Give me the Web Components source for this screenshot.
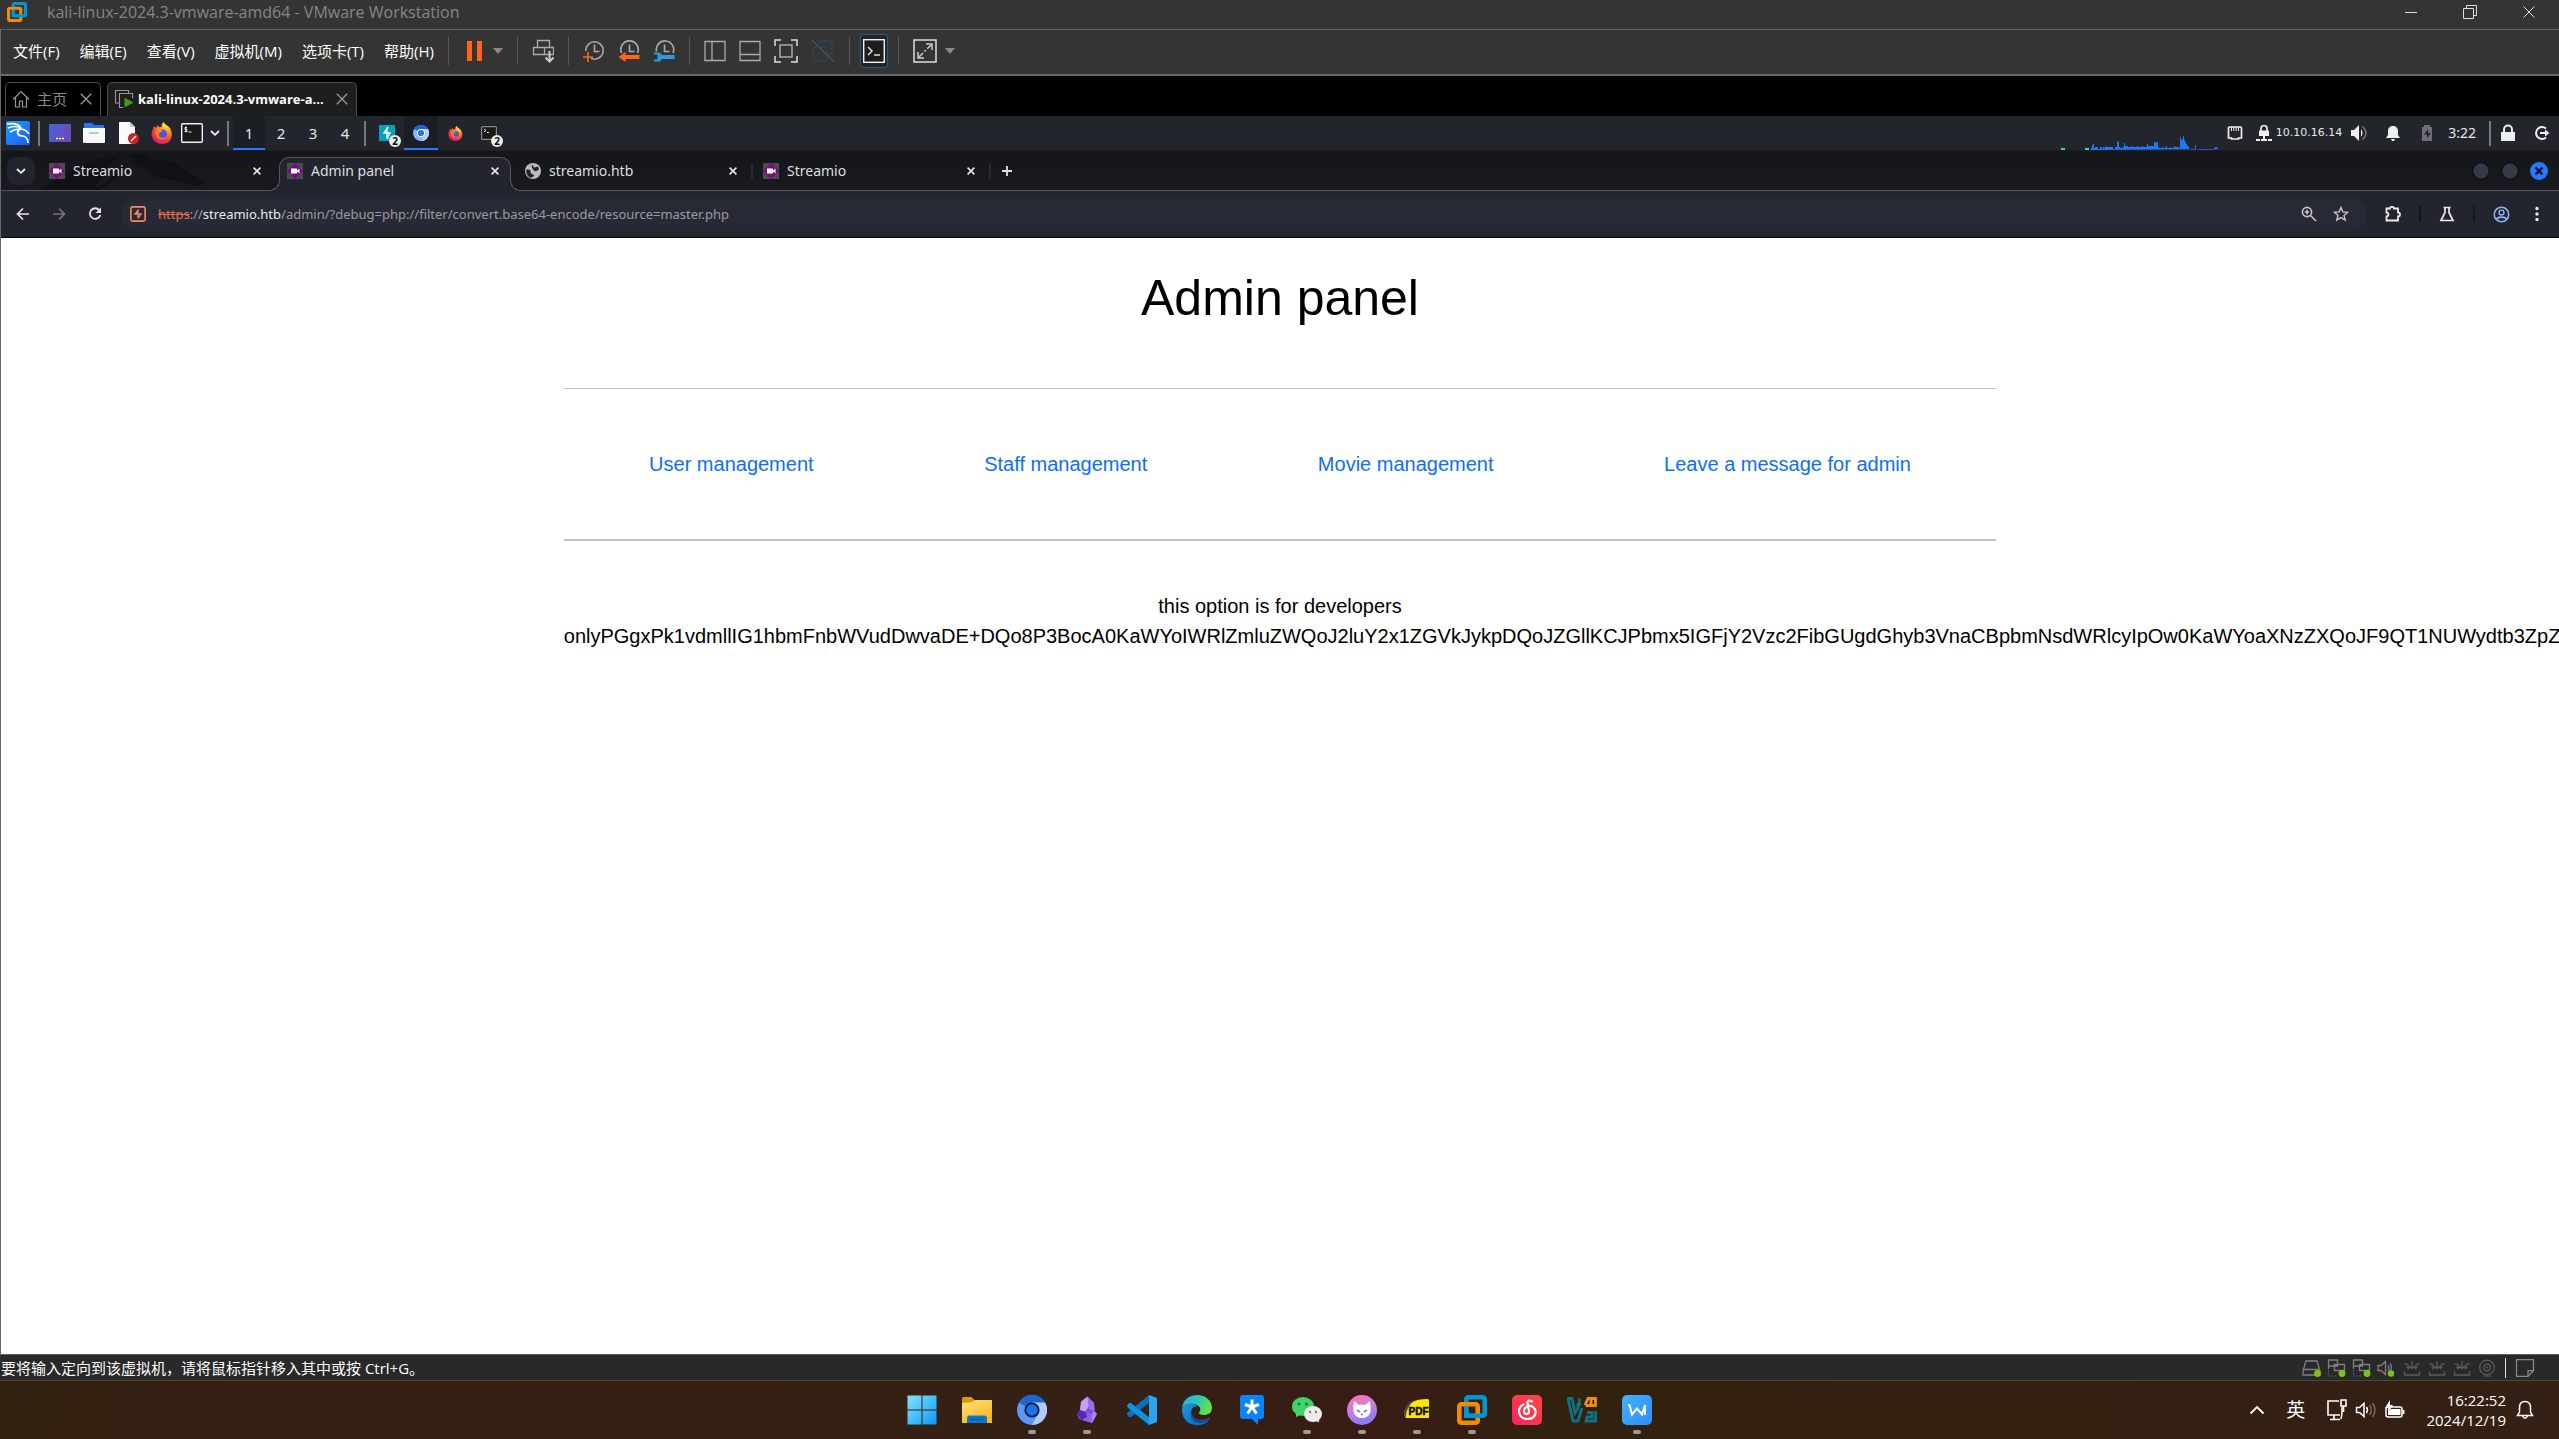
<!DOCTYPE html>
<html lang="zh-CN">
<head>
<meta charset="utf-8">
<meta name="viewport" content="width=device-width, initial-scale=1">
<title>kali-linux-2024.3-vmware-amd64 - VMware Workstation</title>
<style>
  html, body { margin: 0; }
  body { background: #342014; font-family: "Noto Sans", "Noto Sans CJK SC", sans-serif; overflow: hidden; }
</style>
</head>
<body>
<virtual-desktop></virtual-desktop>
<script>
const ICONS = {
  vmware: [30, 30, '<g fill="none" stroke-width="4.6"><rect x="9.3" y="2.3" width="18.4" height="18.4" rx="2" stroke="#0095d3"/><rect x="2.3" y="9.3" width="18.4" height="18.4" rx="2" stroke="#f38b00"/><path d="M9.300 11.600v9.100H25" stroke="#0095d3"/></g>'],
  min: [12, 12, '<path d="M0 6.500h12" stroke="#ddd"/>'],
  restore: [14, 14, '<path d="M.5 3.500h10v10h-10zM3.500 3v-2.500h10v10h-3" fill="none" stroke="#ddd"/>'],
  close: [12, 12, '<path d="M.5.500l11 11M11.500.500l-11 11" stroke="#ddd"/>'],
  pause: [22, 22, '<path d="M4 1h5v20H4zM14 1h5v20h-5z" fill="#ff6418"/>'],
  caret: [10, 6, '<path d="M0 0h10L5 6z" fill="#8a8a8a"/>'],
  print: [22, 24, '<path d="M5.500 8.500v-7h12v7M1.500 8.500h20v7h-20zM12.500 8.500v7M5.500 8.500h12" fill="none" stroke="#aaa" stroke-width="1.300"/><path d="M17.500 12v10M13.500 18.500l4 4 4-4" stroke="#ccc" stroke-width="2" fill="none"/>'],
  snapAdd: [22, 24, '<circle cx="11.500" cy="11.500" r="8.700" fill="none" stroke="#aaa" stroke-width="1.600"/><path d="M11.500 5.500v7h5" fill="none" stroke="#aaa" stroke-width="1.600"/><path d="M0 12h8v11H0z" fill="#343434"/><path d="M5 13v10M0 18h10" stroke="#ff6418" stroke-width="1.600"/>'],
  snapBack: [22, 24, '<path d="M3.500 14a8.700 8.700 0 1 1 16 0" fill="none" stroke="#aaa" stroke-width="1.600"/><path d="M11.500 5.500v7h5" fill="none" stroke="#aaa" stroke-width="1.600"/><path d="M.5 18l7-5v3h14v4h-14v3z" fill="#ff6418"/>'],
  snapTool: [22, 24, '<path d="M3.500 12.500a8.700 8.700 0 1 1 16.500 1.500" fill="none" stroke="#aaa" stroke-width="1.600"/><path d="M11.500 5.500v7h5" fill="none" stroke="#aaa" stroke-width="1.600"/><path d="M1 13.500h5.500l2.500 2.500h12.500v4H9l-2.500 2.500H1V20.500h3.500v-5H1z" fill="#2a9be0"/>'],
  paneLeft: [22, 22, '<path d="M1 1.500h20v19H1zM8 1.500v19" fill="none" stroke="#aaa" stroke-width="1.300"/>'],
  paneBottom: [22, 22, '<path d="M1 1.500h20v19H1zM1 14.500h20" fill="none" stroke="#aaa" stroke-width="1.300"/>'],
  fit: [24, 24, '<path d="M1 7V1h6M17 1h6v6M23 17v6h-6M7 23H1v-6" fill="none" stroke="#ddd" stroke-width="1.500"/><rect x="6" y="6" width="12" height="12" fill="none" stroke="#aaa" stroke-width="1.500"/>'],
  unity: [24, 24, '<g fill="none" stroke="#31414d" stroke-width="1.300"><path d="M8 6V2h13v13h-4M2 8h14v14H2z"/><path d="M1 1l22 22" stroke="#46525a"/></g>'],
  console: [22, 24, '<rect x=".7" y=".7" width="20.600" height="22.600" fill="#1d1d1d" stroke="#f2f2f2" stroke-width="1.400"/><path d="M5 8l4 4-4 4M11 16h6" fill="none" stroke="#ddd" stroke-width="1.500"/>'],
  expand: [24, 24, '<rect x="1" y="1" width="22" height="22" fill="none" stroke="#ddd" stroke-width="1.500"/><path d="M13 5h6v6M5 13v6h6" fill="none" stroke="#ccc" stroke-width="1.500"/><path d="M18.500 5.500l-13 13" stroke="#ccc" stroke-width="1.500" stroke-dasharray="6 2 2 2"/>'],
  home: [18, 18, '<path d="M1 9.500L9 1.500l8 8M3.500 8v9h4v-6h3v6h4V8" fill="none" stroke="#999" stroke-width="1.200"/>'],
  vmOn: [20, 20, '<path d="M5 14H1.500V1.500h13V4M9 18.500H5.500v-14h13V9" fill="none" stroke="#999" stroke-width="1.100"/><path d="M10.500 8.500l9 5-9 5z" fill="#3f9c0c"/>'],
  kali: [26, 26, '<defs><linearGradient id="a" x2="1" y2="1"><stop stop-color="#1fa0ff"/><stop offset="1" stop-color="#1f58f0"/></linearGradient></defs><rect x="1" y="1" width="24" height="24" rx="2" fill="url(#a)"/><path d="M2 4c6-1 12 0 14 4M3 8c5-2 9-2 12 0M5 12c3-2 6-3 10-3 5 0 7 2 9 5M15 9c-4 3-3 7 3 7 4 1 5 4 5 7" fill="none" stroke="#fff" stroke-width="1.700"/>'],
  desktop: [22, 20, '<defs><linearGradient id="a" x2="1" y2=".5"><stop stop-color="#4267d8"/><stop offset="1" stop-color="#7048b8"/></linearGradient></defs><path d="M0 1h22v18H0z" fill="url(#a)"/><path d="M8 15.500h2M11 15.500h2M14 15.500h2" transform="translate(-1)" stroke="#fff" stroke-width="1.500"/>'],
  folder: [22, 20, '<path d="M1 0h8l2 2h10v5H1z" fill="#2877ea"/><path d="M0 5h22v14a1 1 0 0 1-1 1H1a1 1 0 0 1-1-1z" fill="#f7f7f7"/><path d="M6 10h10" stroke="#c6c6c6" stroke-width="2"/>'],
  notepad: [22, 22, '<path d="M2 0h11l5 5v17H2z" fill="#fafafa"/><path d="M13 0v5h5z" fill="#ccc"/><circle cx="16.500" cy="16.500" r="5.500" fill="#cc2024"/><path d="M14 19l5-5" stroke="#fff" stroke-width="1.500"/>'],
  firefox: [22, 22, '<defs><radialGradient id="a" cx=".75" cy=".1" r="1"><stop stop-color="#fff04a"/><stop offset=".35" stop-color="#ff9a1f"/><stop offset=".7" stop-color="#ff3f3c"/><stop offset="1" stop-color="#d8156a"/></radialGradient></defs><path d="M3 4l2 2 2-3 1 2h3c-1-2 0-4 2-5 1 3 3 3 5 5 5 5 4 17-7 17C3 22-2 14 2 7z" fill="url(#a)"/><circle cx="11.500" cy="12" r="4.600" fill="#4a58d8"/><path d="M4 9c3-2 5-1 8 0-2 1-4 1-4 4s4 4 7 2c-2 4-11 3-11-6z" fill="#ff7a2a"/>'],
  terminal: [22, 20, '<rect x=".7" y=".7" width="20.600" height="18.600" rx="1" fill="#191919" stroke="#f0f0f0" stroke-width="1.400"/><path d="M6 4.500H4v2h2v2H3.500M5 3.500v6M7.500 9h3" stroke="#eee" fill="none"/>'],
  termSmall: [16, 14, '<rect x=".6" y=".6" width="14.800" height="12.800" rx="1" fill="#191919" stroke="#888" stroke-width="1.200"/><path d="M3 3l2 1.500L3 6M6 6.500h2" stroke="#eee" fill="none"/>'],
  chevron: [10, 6, '<path d="M1 1l4 3.800L9 1" fill="none" stroke="#eee" stroke-width="1.800"/>'],
  burp: [16, 16, '<path d="M0 0h16v16H0z" fill="#04a3b8"/><path d="M9 2L5 8h3v5M8 3v5h3l-3 6" fill="none" stroke="#fff" stroke-width="1.400"/>'],
  chromium: [30, 30, '<circle cx="15" cy="15" r="15" fill="#5c97f5"/><path d="M15 15L2.010 7.500A15 15 0 0 1 28 7.500z" fill="#1a66d2"/><path d="M15 7.500h13A15 15 0 0 1 15 30l6.500-11.200z" fill="#aecbfa"/><circle cx="15" cy="15" r="7.600" fill="#0d1c38"/><circle cx="15" cy="15" r="5.800" fill="#1a73e8"/>'],
  chromiumS: [16, 16, '<circle cx="8" cy="8" r="8" fill="#8ab4f8"/><path d="M8 8L1 4a8 8 0 0 1 14 0z" fill="#1a66d2"/><path d="M8 4h7a8 8 0 0 1-7 12l3.500-6z" fill="#b5d0fb"/><circle cx="8" cy="8" r="4" fill="#fff"/><circle cx="8" cy="8" r="3.100" fill="#1a73e8"/>'],
  graph: [157, 34, '<path d="M0 32h4v2H0zM24 32h4v2h-4z" fill="#14e0c8"/><path d="M30 34v-2h1v-3h1v-1h1v4h1v-1h3v2h2v-2h2v2h1v-2h1v1h1v-2h1v1h7v2h2v-2h2v-6h1v1h1v5h1v1h3v-1h1v-4h1v3h3v1h4v-1h1v1h4v-1h1v1h4v-1h1v1h4v-3h1v2h6v-4h2v1h1v-1h1v5h1v1h3v-1h1v1h3v-2h1v2h3v-1h1v1h3v-2h1v1h4v1h1V21h1v3h1v-1h1v-3h1v4h1v2h1v2h1v2h2v3h2v1h4v-5h1v4h3v1h4v-1h1v1h3v-1h1v1h3v-1h1v1h2v-2h1v-1h2v1h2v1z" fill="#2277f5"/>'],
  ether: [16, 16, '<path d="M2.500 2h11a1 1 0 0 1 1 1v10h-3v1h-7v-1h-3V3a1 1 0 0 1 1-1z" fill="none" stroke="#eee" stroke-width="1.700"/><path d="M4.500 2v4M6.800 2v4M9.100 2v4M11.400 2v4" stroke="#eee"/>'],
  vpn: [16, 16, '<path d="M3 5.500h10V11H3z" fill="#eee"/><path d="M5 6V3.500a3 3 0 0 1 6 0V6" fill="none" stroke="#eee" stroke-width="1.700"/><path d="M0 15h4M5 15h6M12 15h4M8 11v4" stroke="#eee" stroke-width="2"/>'],
  speaker: [18, 18, '<path d="M1 6h3l5-5v16l-5-5H1z" fill="#eee"/><path d="M11 5q3 4 0 8z" fill="#eee"/><path d="M12.500 2.500q7 6.500 0 13" fill="none" stroke="#777" stroke-width="1.500"/>'],
  bellFill: [16, 16, '<path d="M8 1c3 0 5 2 5 5v4l2 3H1l2-3V6c0-3 2-5 5-5zM6 14h4l-1 2H7z" fill="#eee"/>'],
  charge: [12, 16, '<path d="M3 2V0h6v2h2v14H1V2z" fill="#6d6e74"/><path d="M7 4L3 9.500h3V13l4-5H7z" fill="#22242c"/>'],
  lock: [16, 18, '<path d="M1 8h14v9H1z" fill="#eee"/><path d="M4 8V5.500a4 4 0 0 1 8 0V8" fill="none" stroke="#eee" stroke-width="2"/>'],
  logout: [16, 16, '<path d="M12 3.500a6 6 0 1 0 0 9" fill="none" stroke="#eee" stroke-width="2"/><path d="M6 8h7" stroke="#eee" stroke-width="2"/><path d="M11 4.500L15.500 8 11 11.500z" fill="#eee"/>'],
  movie: [16, 16, '<path d="M0 0h16v16H0z" fill="#4d4b4f"/><path d="M8 0l8 8-8 8-8-8z" fill="#7b0a80"/><path d="M4 5.500h6v5H4zM10 7.500l2.500-2v5l-2.500-2z" fill="#fff"/>'],
  globe: [14, 14, '<circle cx="7" cy="7" r="7" fill="#b9bbbd"/><path d="M1 6c3-1 4 0 4 2s2 1 3 3c0 1-2 1-2 2-3 0-5-3-5-7zM7 1.500c0 2 1 3 3 2s3 2 1 3-3 1-4-1-2-3 0-4z" fill="#222429"/>'],
  x: [8, 8, '<path d="M.6.600l6.800 6.800M7.400.600L.6 7.400" stroke="#e4e4e4" stroke-width="1.700"/>'],
  xWide: [12, 12, '<path d="M.8.800l10.400 10.400M11.200.800L.8 11.200" stroke="#9b9b9b" stroke-width="1.300"/>'],
  plus: [10, 10, '<path d="M5 0v10M0 5h10" stroke="#e0e0e0" stroke-width="1.800"/>'],
  wmClose: [18, 18, '<circle cx="9" cy="9" r="9" fill="#2777ff"/><path d="M5.500 5.500l7 7M12.500 5.500l-7 7" stroke="#101420" stroke-width="2.300"/>'],
  wmDot: [18, 18, '<circle cx="9" cy="9" r="8.300" fill="#353a47" stroke="#0b0c0f" stroke-width="1.200"/>'],
  back: [14, 14, '<path d="M13 7H2M7 1.500L1.500 7 7 12.500" fill="none" stroke="#e6e6e6" stroke-width="1.700"/>'],
  forward: [14, 14, '<path d="M1 7h11M7 1.500L12.500 7 7 12.500" fill="none" stroke="#75767c" stroke-width="1.700"/>'],
  reload: [14, 14, '<path d="M11.300 3.200A5.300 5.300 0 1 0 12.300 8" fill="none" stroke="#e6e6e6" stroke-width="1.800"/><path d="M13 .5v5.500H7.500z" fill="#e6e6e6"/>'],
  siteBurp: [16, 16, '<rect x=".9" y=".9" width="14.200" height="14.200" rx="1.500" fill="none" stroke="#f28b63" stroke-width="1.600"/><path d="M8.500 3.500L5 8h3v4M8 4v4h3l-3 4.500" fill="none" stroke="#f28b63" stroke-width="1.300"/>'],
  zoomIn: [16, 16, '<circle cx="6" cy="6" r="4.600" fill="none" stroke="#c4c5c9" stroke-width="1.600"/><path d="M9.500 9.500l5.500 5.500M6 3.800v4.400M3.800 6h4.400" stroke="#c4c5c9" stroke-width="1.600"/>'],
  star: [16, 16, '<path d="M8 1.500l1.900 4.400 4.800.4-3.700 3.100 1.200 4.700L8 11.600l-4.200 2.500L5 9.400 1.300 6.300l4.800-.4z" fill="none" stroke="#c4c5c9" stroke-width="1.400"/>'],
  puzzle: [16, 16, '<path d="M1.500 2.500H5a2 1.700 0 0 1 4 0h4v4a2 2 0 0 1 0 4v4H1.500v-4a2 2 0 0 0 0-4z" fill="none" stroke="#eaeaea" stroke-width="1.800"/>'],
  flask: [16, 16, '<path d="M4.500 1.500h7M6 1.500v5L2 14.500h12l-4-8v-5" fill="none" stroke="#eaeaea" stroke-width="1.700"/>'],
  user: [18, 18, '<circle cx="9" cy="9" r="7.700" fill="none" stroke="#8fb3f5" stroke-width="1.600"/><circle cx="9" cy="7" r="2.600" fill="none" stroke="#8fb3f5" stroke-width="1.500"/><path d="M3.500 14c2-3 9-3 11 0" fill="none" stroke="#8fb3f5" stroke-width="1.700"/>'],
  more: [4, 16, '<circle cx="2" cy="2.500" r="1.700" fill="#e6e6e6"/><circle cx="2" cy="8" r="1.700" fill="#e6e6e6"/><circle cx="2" cy="13.500" r="1.700" fill="#e6e6e6"/>'],
  dragon: [170, 38, '<path d="M0 38C20 26 38 14 56 8c10-3 22-4 30-6-8 4-14 8-18 14-2 8-8 16-16 22zM92 2c10-1 14 3 22 6 12-1 22 1 30 9 7 4 16 8 22 14l-8 3-20-5-18-3c-14-8-24-18-28-24z" fill="#101115"/><path d="M54 38c14-4 24-14 32-26M100 16l-4-8M110 18l-3-8" stroke="#101115" stroke-width="3" fill="none"/>'],
  hdd: [20, 18, '<path d="M1 12l3-10h11l3 10v4H1zM1 10.500h17" fill="none" stroke="#808080" stroke-width="1.300"/><circle cx="15.500" cy="14.500" r="3.400" fill="#7ac618"/>'],
  net: [20, 18, '<path d="M1.500 1h9v6h-9zM7.500 5.500h10v6h-10zM1.500 7v3" fill="none" stroke="#808080" stroke-width="1.300"/><path d="M1.500 11v6h9" fill="none" stroke="#666" stroke-dasharray="1.500 1.500"/><circle cx="15" cy="14.500" r="3.400" fill="#7ac618"/>'],
  sound: [20, 18, '<path d="M1 6.500h3l4.500-4v13L4 11.500H1zM11 6.500q2 2.500 0 5M13 4.500q3 4 0 8" fill="none" stroke="#808080" stroke-width="1.300"/><circle cx="14" cy="14.500" r="3.200" fill="#7ac618"/>'],
  usb: [20, 18, '<path d="M2.500 12.500v3.500h15v-3.500M10 2v7M8 7.500l2 2 2-2M2.500 5q4-1 4 4M17.500 5q-4-1-4 4M4.500 8l2 1.500 1.500-2M15.500 8l-2 1.500-1.500-2" fill="none" stroke="#5c5c5c" stroke-width="1.300"/>'],
  cam: [20, 18, '<circle cx="10" cy="8.500" r="7.300" fill="none" stroke="#5c5c5c" stroke-width="1.200"/><circle cx="10" cy="8.500" r="3.300" fill="none" stroke="#5c5c5c" stroke-width="1.200"/><circle cx="10" cy="8.500" r="1" fill="#5c5c5c"/><path d="M6 17h8" stroke="#5c5c5c"/>'],
  note: [20, 18, '<path d="M1.500.700h17v11l-5.500 5.600H1.500zM18.500 11.700H13v5.600" fill="none" stroke="#8a8a8a" stroke-width="1.200"/>'],
  windows: [30, 30, '<defs><linearGradient id="a" gradientUnits="userSpaceOnUse" x2="29" y2="29"><stop stop-color="#8fdcfa"/><stop offset=".5" stop-color="#45c2fa"/><stop offset="1" stop-color="#0f96f5"/></linearGradient></defs><path d="M.5.500h14v14H.5zM15.500.500h14v14h-14zM.5 15.500h14v14H.5zM15.500 15.500h14v14h-14z" fill="url(#a)"/>'],
  explorer: [30, 30, '<defs><linearGradient id="a" x2=".6" y2="1"><stop stop-color="#ffe07a"/><stop offset="1" stop-color="#f9b91e"/></linearGradient></defs><path d="M0 3.500a1.500 1.500 0 0 1 1.500-1.500h8l3 3v4H0z" fill="#dc9706"/><path d="M0 8l10-1 3-2h17v23H0z" fill="url(#a)"/><path d="M5 28v-5a2.500 2.500 0 0 1 2.500-2.500h15A2.500 2.500 0 0 1 25 23v5z" fill="#0a78d0"/><path d="M8.500 24.500h13" stroke="#064c86" stroke-width="1.300"/>'],
  obsidian: [30, 30, '<path d="M15.500 1.500L22 8l1 9 2 2-5 9-13-4-2-5 3-4 1-9z" fill="#7b4bd8"/><path d="M15.500 1.500L9 7l-1 8 5 2 4-6z" fill="#c4a3f7"/><path d="M15.500 1.500L22 8l.5 8L17 14z" fill="#9a6cf0"/><path d="M8 15l6 2 1 5-5 3-5-6z" fill="#5b23b0"/><path d="M14 17l6 2 0 9-10-3 5-3z" fill="#8f5fe6"/><path d="M20 19l2-3 3 3-5 9z" fill="#a88af5"/>'],
  vscode: [30, 30, '<path d="M22 0l8 3v24l-8 3z" fill="#2aa4ef"/><path d="M22 0v8L4 22l-2 0-2-2.500v-1.500z" fill="#0a70b8"/><path d="M22 30v-8L4 8H2L0 10.500 1 13z" fill="#1290d8"/><path d="M22 8l-8 7 8 7z" fill="#342014"/>'],
  edge: [30, 30, '<defs><linearGradient id="a" x2="1" y2=".4"><stop stop-color="#2aa8ea"/><stop offset=".55" stop-color="#2cc8b8"/><stop offset="1" stop-color="#66e048"/></linearGradient><linearGradient id="b" y2="1"><stop stop-color="#1c94dc"/><stop offset="1" stop-color="#0c68b8"/></linearGradient></defs><path d="M0 13C1 5 7 0 15 0c9 0 15 6 15 13 0 5-4 7-8 7-3 0-5-1-5-2s2-2 1-5c-2-5-13-6-18 0z" fill="url(#a)"/><path d="M0 13c5-6 13-5 16-2-6 0-9 6-6 11 3 6 11 7 17 3-3 4-7 5-12 5C6 30-1 23 0 13z" fill="url(#b)"/><path d="M13 12c-5 3-4 10 2 12 5 2 10 0 12-2 1 0 1 1 0 3-7 5-19 4-18-6 0-4 2-6 4-7z" fill="#134d94"/>'],
  ticktalk: [30, 30, '<path d="M6 0h18a3 3 0 0 1 3 3v18a3 3 0 0 1-3 3h-3v6l-6-6H6a3 3 0 0 1-3-3V3a3 3 0 0 1 3-3z" fill="#0b84fb"/><path d="M15 12V4.500M15 12l7-2.500M15 12l4.500 6.500M15 12l-4.500 6.500M15 12L8 9.500" stroke="#fff" stroke-width="3"/>'],
  wechat: [30, 30, '<ellipse cx="11" cy="11.500" rx="11" ry="9.500" fill="#3fd46a"/><path d="M4 18v4l5-2z" fill="#3fd46a"/><circle cx="7" cy="9" r="1.500" fill="#0b7a35"/><circle cx="14.500" cy="9" r="1.500" fill="#0b7a35"/><ellipse cx="21" cy="19" rx="9" ry="8" fill="#ededed"/><path d="M23 25l4 2.500V23z" fill="#ededed"/><circle cx="18" cy="17" r="1.200" fill="#777"/><circle cx="24" cy="17" r="1.200" fill="#777"/>'],
  cat: [30, 30, '<defs><linearGradient id="a" x2=".3" y2="1"><stop stop-color="#ff7aa8"/><stop offset=".55" stop-color="#c87be0"/><stop offset="1" stop-color="#8a7cf8"/></linearGradient></defs><circle cx="15" cy="15" r="15" fill="url(#a)"/><path d="M7 6l5 4q3-1 6 0l5-4q1 6 .5 11-2 6-8.500 6T6.500 17Q6 12 7 6z" fill="#fff"/><path d="M10 15l3 2M20 15l-3 2" stroke="#9a6be0" stroke-width="1.700"/><path d="M14 19.500h2" stroke="#9a6be0" stroke-width="1.500"/>'],
  pdf: [30, 30, '<path d="M2 20C2 10 10 4 26 4l1 1v18H4z" fill="#ffe600"/><path d="M2 20C2 10 8 5 14 5 8 8 4 14 4 22z" fill="#444"/><text x="16.500" y="20" text-anchor="middle" font-family="Liberation Sans" font-weight="700" font-size="10" fill="#111" stroke="#111" stroke-width=".6">PDF</text>'],
  netease: [30, 30, '<defs><linearGradient id="a" x1="1" x2="0" y2="1"><stop stop-color="#ff4a42"/><stop offset="1" stop-color="#ff1f60"/></linearGradient></defs><rect width="30" height="30" rx="5" fill="url(#a)"/><path d="M20 6.500c-3-2-5-.5-4.500 2l1.500 7.500c.5 4-5 4-5 .5C12 12 17 9.500 21 12c5 4 2.500 12-5.500 12C6 24 4.500 13 11.500 9.500" fill="none" stroke="#fff" stroke-width="2.200" stroke-linecap="round"/>'],
  vb: [30, 30, '<g fill="none" stroke="#0d7486" stroke-width="2.800"><path d="M12.500 11V3.500M11 8v5l-3 5L5 3.500H1L6 26h5l4-13"/><path d="M28.500 16v10H19l1-4h5v-4.500h-5"/><path d="M18 10L21 3.500h7.500v7h-10M24 5v4" stroke="#f08a10"/></g>'],
  wps: [30, 30, '<defs><linearGradient id="a" y2="1"><stop stop-color="#42b0ff"/><stop offset="1" stop-color="#2f8bfa"/></linearGradient></defs><rect width="30" height="30" rx="5" fill="url(#a)"/><path d="M6 10h1.500l2.500 9.500 5-6 5 6L23 10V20" fill="none" stroke="#fff" stroke-width="2"/>'],
  up: [16, 10, '<path d="M1.500 8.500L8 2l6.500 6.500" fill="none" stroke="#fff" stroke-width="1.800"/>'],
  trayNet: [22, 22, '<path d="M13 2H2v14h12M8 16v4M4 20.500h10M16 8v5q0 3-1 7" fill="none" stroke="#fff" stroke-width="1.600"/><path d="M15 1h5v6h-5zM17.500 7v6" fill="none" stroke="#fff" stroke-width="1.600"/>'],
  trayVol: [22, 22, '<path d="M1.500 8.500h3L9 4.500v13l-4.500-4h-3z" fill="none" stroke="#fff" stroke-width="1.500"/><path d="M11.500 8q2 3 0 6" fill="none" stroke="#fff" stroke-width="1.500"/><path d="M14.500 6q3.500 5 0 10M17.500 4q5 7 0 14" fill="none" stroke="#7a6b60" stroke-width="1.400"/>'],
  trayBat: [22, 22, '<rect x="2" y="8" width="16" height="10" rx="2" fill="#342014" stroke="#fff" stroke-width="1.500"/><path d="M7 10h9.500v6H4v-3z" fill="#fff"/><path d="M19.500 11v4" stroke="#fff" stroke-width="2"/><path d="M6 1L1 9h3v5l5-8H6z" fill="#fff"/>'],
  trayBell: [18, 20, '<path d="M9 1.500c3.500 0 5.500 2.500 5.500 6V12l2 3.500h-15l2-3.500V7.500c0-3.500 2-6 5.500-6zM6.500 16q2.500 4.500 5 0" fill="none" stroke="#fff" stroke-width="1.500"/>']
};

class UiIcon extends HTMLElement {
  connectedCallback() {
    const [w, h, art] = ICONS[this.getAttribute('name')];
    const size = +this.getAttribute('size') || w;
    this.attachShadow({ mode: 'open' }).innerHTML =
      `<style>:host{display:inline-flex;flex:none}svg{display:block}</style>
       <svg width="${size}" height="${h * size / w}" viewBox="0 0 ${w} ${h}" aria-hidden="true">${art}</svg>`;
  }
}
customElements.define('ui-icon', UiIcon);

const RESET = `
  *{box-sizing:border-box}
  button{appearance:none;border:0;padding:0;margin:0;background:none;color:inherit;font:inherit;display:flex;align-items:center;justify-content:center;flex:none}
  .sep{flex:none;width:1px}
  .grow{flex:1}
`;
const HOST_FONT = '"Open Sans","Noto Sans CJK SC",sans-serif';
const icon = (n, s) => `<ui-icon name="${n}"${s ? ` size="${s}"` : ''}></ui-icon>`;
const btn = (n, label, s) => `<button aria-label="${label}">${icon(n, s)}</button>`;
function define(name, html) {
  const t = document.createElement('template');
  t.innerHTML = html.replace('<style>', '<style>' + RESET);
  customElements.define(name, class extends HTMLElement {
    constructor() {
      super();
      this.attachShadow({ mode: 'open' }).append(t.content.cloneNode(true));
    }
  });
}

define('window-title', `<style>
  :host{display:flex;align-items:center;height:29px;background:#343434;padding:0 16px 6px 7px;font:16px/22px ${HOST_FONT};color:#868686}
  .name{margin-left:20px}
  .controls{display:flex;gap:31px}
  button{width:28px;height:22px}
</style>${icon('vmware', 20)}<span class="name"><slot></slot></span><span class="grow"></span>
<div class="controls">${btn('min', '最小化')}${btn('restore', '还原')}${btn('close', '关闭')}</div>`);

define('menu-bar', `<style>
  :host{display:flex;align-items:center;gap:14px;height:47px;background:#343434;border-top:1px solid #5e5e5e;border-bottom:2px solid #696969;padding:0 0 2px 12px;font:15px/20px ${HOST_FONT};color:#fff}
  nav,.set{display:flex;align-items:center}
  nav{gap:20px}
  .set{gap:13px}
  .drop{gap:8px}
  .sep{height:28px;background:#5a5a5a}
  .on{width:28px;height:34px;border:1px solid #1c5f96;border-radius:3px;background:#252525;margin:0 -4px}
</style><nav><slot></slot></nav><i class="sep"></i>
<div class="set drop">${btn('pause', '挂起')}${btn('caret', '电源选项')}</div><i class="sep"></i>
${btn('print', '发送 Ctrl+Alt+Del')}<i class="sep"></i>
<div class="set">${btn('snapAdd', '拍摄快照')}${btn('snapBack', '恢复快照')}${btn('snapTool', '管理快照')}</div><i class="sep"></i>
<div class="set">${btn('paneLeft', '显示库')}${btn('paneBottom', '缩略图')}${btn('fit', '全屏')}${btn('unity', 'Unity')}</div><i class="sep"></i>
<button class="on" aria-label="控制台视图">${icon('console')}</button><i class="sep"></i>
<div class="set drop">${btn('expand', '自由拉伸')}${btn('caret', '拉伸选项')}</div>`);

define('menu-item', `<style>:host{display:block}button{line-height:20px}</style><button><slot></slot></button>`);

define('vm-tab', `<style>
  :host{display:flex;align-items:center;gap:7px;height:34px;border:1px solid #4b4b4b;border-bottom:0;border-radius:5px 5px 0 0;padding:0 8px 2px 6px;font:15px/20px ${HOST_FONT};color:#8a8a8a}
  :host([active]){background:#1e1e1e;color:#fff;font-weight:700;font-size:13px;gap:4px}
  .t{flex:1;white-space:nowrap}
</style><slot name="icon"></slot><span class="t"><slot></slot></span>${btn('xWide', '关闭选项卡')}`);

define('vm-tabs', `<style>
  :host{display:flex;align-items:flex-end;gap:6px;height:40px;background:#000;padding-left:4px}
  .home{width:96px}.guest{width:250px}
</style><vm-tab class="home"><ui-icon slot="icon" name="home"></ui-icon>主页</vm-tab>
<vm-tab class="guest" active><ui-icon slot="icon" name="vmOn"></ui-icon>kali-linux-2024.3-vmware-a...</vm-tab>`);

define('guest-panel', `<style>
  :host{display:flex;align-items:center;height:35px;background:#23252d;border-bottom:1px solid #1f2027;color:#e6e6e6;font-size:15px;line-height:20px;padding-left:4px}
  .sep{width:2px;height:25px;background:#77787c}
  .launch{display:flex;gap:12px;padding:0 8px 0 9px;align-items:center}
  .term{display:flex;gap:7px;align-items:center;padding-right:7px}
  .logo{padding-right:7px}
  .spaces,.wins{display:flex;padding:0 3px 0 4px;height:100%}
  .spaces button{width:32px}
  .wins button,.tray button{width:34px;height:100%;position:relative}
  .spaces .on,.wins .on{background:#1c1e25;border:solid #2777ff;border-width:0 0 2px;padding-top:2px}
  b{position:absolute;left:19px;top:19px;width:12px;height:12px;border-radius:6px;background:#eee;color:#111;font:700 10px/12px "Noto Sans",sans-serif;text-align:center}
  .tray{display:flex;align-items:center;height:100%}
  .tray .vpn{width:24px}
  .ip{font:11px/16px "DejaVu Sans",sans-serif}
  time{padding:0 13px 0 4px;font-size:14px}
</style><button class="logo" aria-label="Applications">${icon('kali')}</button><i class="sep"></i>
<div class="launch">${btn('desktop', 'Show Desktop')}${btn('folder', 'Files')}${btn('notepad', 'Text Editor')}${btn('firefox', 'Firefox')}</div>
<div class="term">${btn('terminal', 'Terminal')}${btn('chevron', 'More launchers')}</div><i class="sep"></i>
<div class="spaces"><button class="on">1</button><button>2</button><button>3</button><button>4</button></div><i class="sep"></i>
<div class="wins"><button aria-label="Burp Suite">${icon('burp')}<b>2</b></button><button class="on" aria-label="Chromium">${icon('chromiumS')}</button><button aria-label="Firefox">${icon('firefox', 15)}</button><button aria-label="Terminals">${icon('termSmall')}<b>2</b></button></div>
<span class="grow"></span>${icon('graph')}
<div class="tray">${btn('ether', 'Network')}<button class="vpn" aria-label="VPN">${icon('vpn')}</button><span class="ip">10.10.16.14</span>${btn('speaker', 'Volume')}${btn('bellFill', 'Notifications')}${btn('charge', 'Battery')}<time>3:22</time><i class="sep"></i>${btn('lock', 'Lock')}${btn('logout', 'Log out')}</div>`);

define('browser-tab', `<style>
  :host{display:flex;align-items:center;gap:8px;width:232px;height:33px;padding:0 12px 6px 8px;position:relative;font-size:14px;line-height:20px;color:#dcdde0}
  .t{flex:1}
  :host([divider])::after{content:"";position:absolute;left:234px;top:6px;width:2px;height:16px;background:#272a33}
  :host([active]){background:#23252e;height:34px;margin-bottom:-1px;padding:0 11px 7px 7px;border:1px solid #55575f;border-bottom:0;border-radius:10px 10px 0 0}
  :host([active])::before,:host([active])::after{content:"";position:absolute;bottom:0;width:11px;height:11px}
  :host([active])::before{left:-11px;background:radial-gradient(circle at 0 0,#18191d 10px,#55575f 10px 11px,#23252e 11px)}
  :host([active])::after{right:-11px;background:radial-gradient(circle at 100% 0,#18191d 10px,#55575f 10px 11px,#23252e 11px)}
</style><slot name="icon"></slot><span class="t"><slot></slot></span>${btn('x', 'Close tab')}`);

define('browser-tabs', `<style>
  :host{display:flex;align-items:flex-end;height:40px;position:relative;background:linear-gradient(#15161a,#191a1f);border-bottom:1px solid #55575f;padding:0 11px 0 6px}
  .art{position:absolute;left:38px;top:1px}
  .search,.add,.wm{margin-bottom:5px}
  .search{width:28px;height:28px;border-radius:9px;background:#23252e;position:relative}
  .tabs{display:flex;gap:6px;margin-left:6px;position:relative}
  .add{width:28px;height:28px;margin-left:6px}
  .wm{display:flex;gap:11px;height:28px;align-items:center}
</style><span class="art">${icon('dragon')}</span><button class="search" aria-label="Search tabs">${icon('chevron')}</button>
<div class="tabs">
<browser-tab><ui-icon slot="icon" name="movie"></ui-icon>Streamio</browser-tab>
<browser-tab active><ui-icon slot="icon" name="movie"></ui-icon>Admin panel</browser-tab>
<browser-tab divider><ui-icon slot="icon" name="globe" size="16"></ui-icon>streamio.htb</browser-tab>
<browser-tab divider><ui-icon slot="icon" name="movie"></ui-icon>Streamio</browser-tab>
</div><button class="add" aria-label="New tab">${icon('plus')}</button><span class="grow"></span>
<div class="wm">${btn('wmDot', 'Minimize')}${btn('wmDot', 'Maximize')}${btn('wmClose', 'Close')}</div>`);

define('address-bar', `<style>
  :host{display:flex;align-items:center;gap:12px;height:47px;background:#23252e;border-bottom:1px solid #08080a;padding:0 12px 0 8px}
  .nav{display:flex;gap:8px}
  button{width:28px;height:28px}
  .box{flex:1;display:flex;align-items:center;height:34px;border-radius:17px;background:#272a35;padding:0 12px 0 9px;font-size:13px;line-height:20px;color:#9a9ba0;white-space:nowrap}
  .site{width:16px;margin-right:12px}
  .url{flex:1;outline:0}
  .bad{color:#e2714c;text-decoration:line-through}
  .host{color:#e8e8ea}
  .in{display:flex;gap:4px}
  .sep{width:2px;height:16px;background:#15161a}
  .dots{width:20px}
</style><div class="nav">${btn('back', 'Back')}${btn('forward', 'Forward')}${btn('reload', 'Reload')}</div>
<div class="box"><button class="site" aria-label="Site information">${icon('siteBurp')}</button><div class="url" role="textbox" aria-label="Address" contenteditable="true" spellcheck="false"><span class="bad">https</span>://<span class="host">streamio.htb</span>/admin/?debug=php://filter/convert.base64-encode/resource=master.php</div>
<div class="in">${btn('zoomIn', 'Zoom')}${btn('star', 'Bookmark')}</div></div>
${btn('puzzle', 'Extensions')}<i class="sep"></i>${btn('flask', 'Labs')}<i class="sep"></i>${btn('user', 'Profile', 17)}<button class="dots" aria-label="Menu">${icon('more')}</button>`);

define('admin-page', `<style>
  :host{display:block;flex:1;background:#fff;color:#000;font:20px/30px "Liberation Sans",Arial,sans-serif;overflow:hidden}
  main{width:56%;margin:0 auto;text-align:center}
  h1{margin:0;padding:30px 0 60px;font-size:50px;line-height:60px;font-weight:400}
  nav{display:flex;justify-content:space-around;padding:60px 0;border-top:1px solid #c2c2c2;border-bottom:2px solid #c2c2c2}
  a{color:#0d6efd;text-decoration:none}
  p{margin:50px 0 0}
  .out{margin:0;text-align:left;white-space:nowrap}
</style><main><h1>Admin panel</h1>
<nav><a href="#user">User management</a><a href="#staff">Staff management</a><a href="#movie">Movie management</a><a href="#message">Leave a message for admin</a></nav>
<p>this option is for developers</p><p class="out">onlyPGgxPk1vdmllIG1hbmFnbWVudDwvaDE+DQo8P3BocA0KaWYoIWRlZmluZWQoJ2luY2x1ZGVkJykpDQoJZGllKCJPbmx5IGFjY2Vzc2FibGUgdGhyb3VnaCBpbmNsdWRlcyIpOw0KaWYoaXNzZXQoJF9QT1NUWydtb3ZpZ</p></main>`);

define('vm-status', `<style>
  :host{display:flex;align-items:center;height:26px;background:#292929;border-top:1px solid #5e5e5e;padding:0 24px 0 1px;font:15px/22px ${HOST_FONT};color:#fff}
  .dev{display:flex;gap:5px;padding-right:8px}
  .sep{height:20px;background:#ddd;margin-right:9px}
</style><span><slot></slot></span><span class="grow"></span>
<div class="dev">${btn('hdd', '硬盘')}${btn('net', '网络适配器')}${btn('net', '网络适配器 2')}${btn('sound', '声卡')}${btn('usb', 'USB')}${btn('usb', 'USB 2')}${btn('usb', 'USB 3')}${btn('cam', '摄像头')}</div><i class="sep"></i>${btn('note', '消息日志')}`);

define('task-app', `<style>
  :host{display:flex}
  button{width:30px;height:58px;position:relative}
  :host([running]) button::after{content:"";position:absolute;left:11px;bottom:5px;width:8px;height:4px;border-radius:2px;background:#a29a94}
</style><button><slot></slot></button>`);

define('task-bar', `<style>
  :host{display:grid;grid-template-columns:1fr auto 1fr;align-items:center;height:59px;border-top:1px solid #50443a;background:linear-gradient(90deg,#31200f,#371f14 12%,#342014 45%,#381c14 54%,#33210f 60%,#342014);color:#fff;font:15px/20px ${HOST_FONT}}
  .apps{grid-column:2;display:flex;gap:25px}
  .tray{display:flex;align-items:center;justify-self:end;padding-right:25px}
  .lang{margin:0 21px;font-size:19px;line-height:24px}
  .sys{display:flex;gap:7px;margin-right:20px}
  time{text-align:right;margin-right:10px}
</style><div class="apps">
${[['windows'], ['explorer'], ['chromium', 1], ['obsidian', 1], ['vscode'], ['edge'], ['ticktalk'], ['wechat', 1], ['cat', 1], ['pdf', 1], ['vmware', 1], ['netease'], ['vb'], ['wps', 1]]
  .map(([n, r]) => `<task-app${r ? ' running' : ''}>${icon(n)}</task-app>`).join('')}
</div><div class="tray">${btn('up', '显示隐藏的图标')}<button class="lang">英</button><button class="sys" aria-label="网络、音量和电池">${icon('trayNet')}${icon('trayVol')}${icon('trayBat')}</button><time>16:22:52<br>2024/12/19</time>${btn('trayBell', '通知')}</div>`);

define('virtual-desktop', `<style>
  :host{display:flex;flex-direction:column;min-height:100vh}
  .guest{flex:1;display:flex;flex-direction:column;border-left:1px solid #696969;min-width:0}
</style>
<window-title>kali-linux-2024.3-vmware-amd64 - VMware Workstation</window-title>
<div class="guest">
<menu-bar><menu-item>文件(F)</menu-item><menu-item>编辑(E)</menu-item><menu-item>查看(V)</menu-item><menu-item>虚拟机(M)</menu-item><menu-item>选项卡(T)</menu-item><menu-item>帮助(H)</menu-item></menu-bar>
<vm-tabs></vm-tabs><guest-panel></guest-panel><browser-tabs></browser-tabs><address-bar></address-bar><admin-page></admin-page>
</div>
<vm-status>要将输入定向到该虚拟机，请将鼠标指针移入其中或按 Ctrl+G。</vm-status>
<task-bar></task-bar>`);
</script>
</body>
</html>
